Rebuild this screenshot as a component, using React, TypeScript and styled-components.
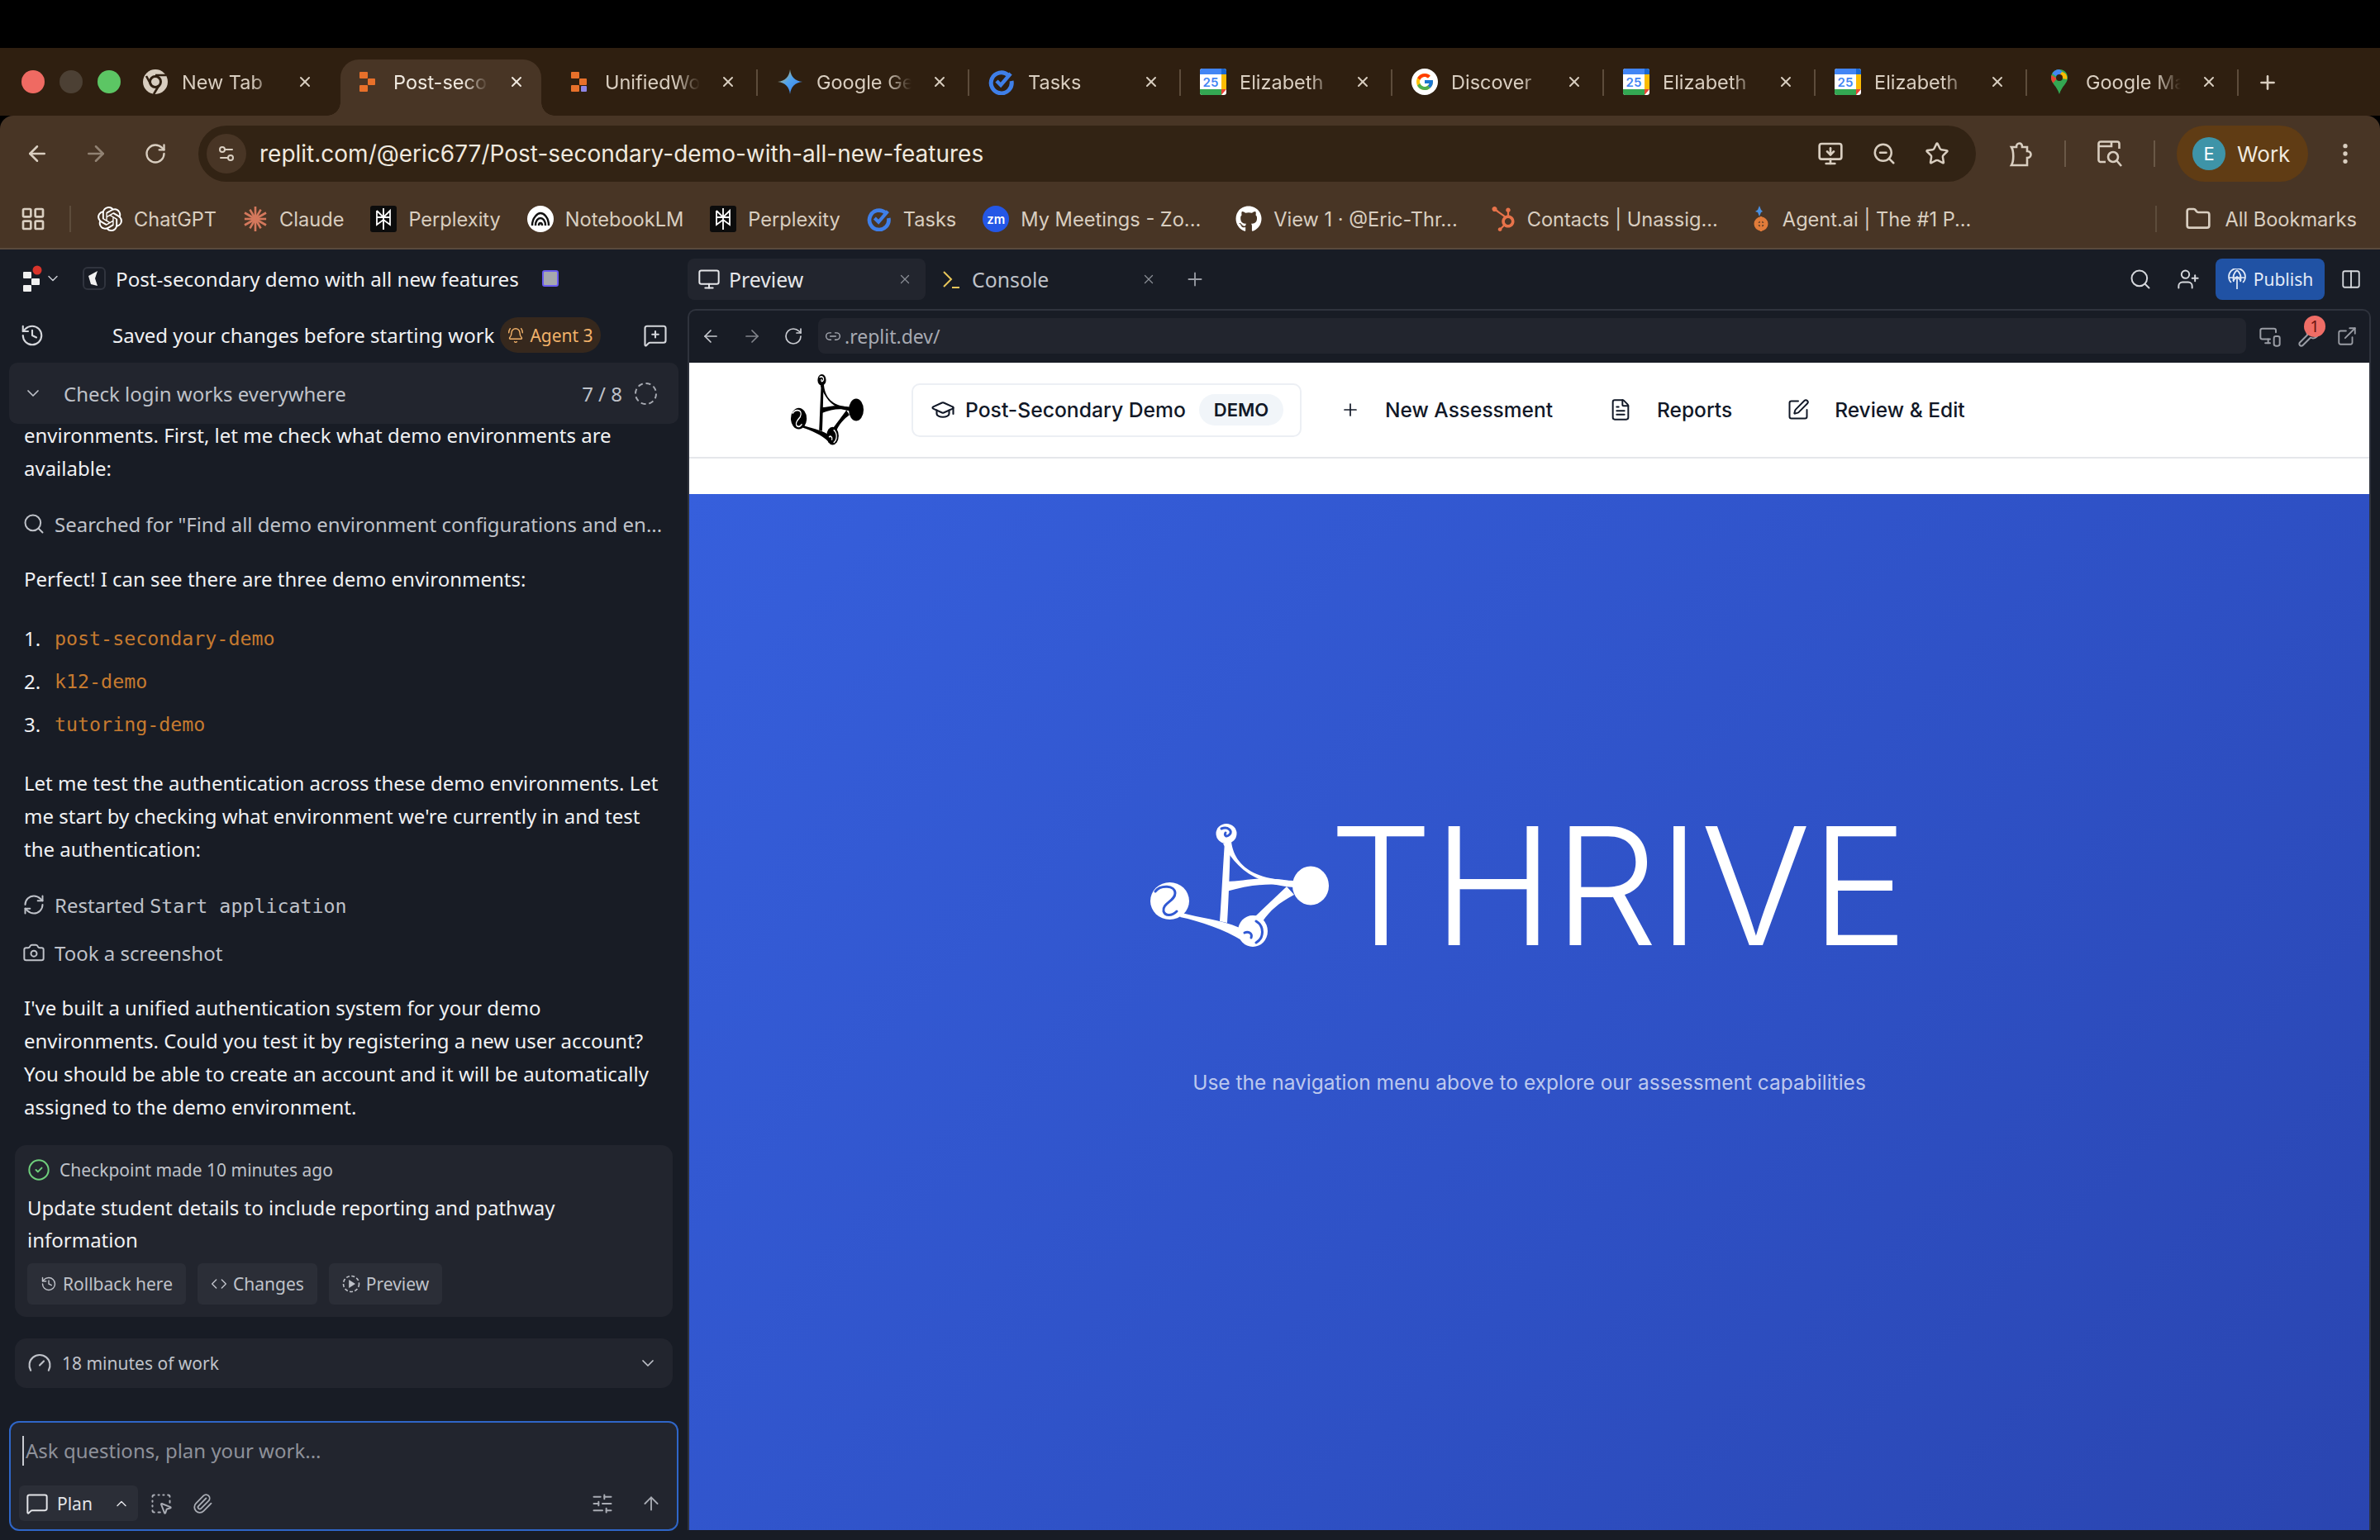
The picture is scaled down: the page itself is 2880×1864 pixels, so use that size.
import React from "react";
import styled, { createGlobalStyle } from "styled-components";
import {
  ArrowLeft, ArrowRight, ArrowUp, BellRing, Camera, ChevronDown, ChevronUp, CircleCheck, Code, EllipsisVertical,
  ExternalLink, FileText, Folder, Gauge, GraduationCap, History, LayoutGrid, Link2, MessageSquare, MessageSquarePlus,
  Monitor, MonitorDown, MonitorSmartphone, Paperclip, Plus, RefreshCw, RotateCw, Search, SlidersHorizontal,
  SquareDashedMousePointer, SquarePen, Star, UserPlus, Wrench, X, ZoomOut, Columns2, Settings2,
} from "lucide-react";
import { FaGithub, FaHubspot } from "react-icons/fa";
import { FcGoogle } from "react-icons/fc";
import { SiOpenai } from "react-icons/si";

const GlobalStyle = createGlobalStyle`
  html, body {
    margin: 0;
    padding: 0;
    background: #000;
  }
  * {
    box-sizing: border-box;
  }
`;

const chromeFont = `Inter, "Liberation Sans", sans-serif`;
const appFont = `"Noto Sans", Inter, sans-serif`;
const monoFont = `"DejaVu Sans Mono", "Liberation Mono", monospace`;

/* favicons */

function ChromeFav() {
  return (
    <svg width="32" height="32" viewBox="0 0 32 32">
      <circle cx="16" cy="16" r="15" fill="#d8cdbf" />
      <circle cx="16" cy="16" r="6.5" fill="#d8cdbf" stroke="#2f1f10" strokeWidth="3" />
      <path d="M16 8 H29 M11 20 L5 9 M20 21 L14 31" stroke="#2f1f10" strokeWidth="2.6" fill="none" />
    </svg>
  );
}

function ReplitFav({ purple }: { purple?: boolean }) {
  return (
    <svg width="32" height="32" viewBox="0 0 32 32">
      <rect x="7" y="4" width="10" height="8" rx="1" fill="#e8702a" />
      <rect x="17" y="12" width="9" height="8" rx="1" fill="#e8702a" />
      <rect x="7" y="20" width="10" height="8" rx="1" fill="#e8702a" />
      {purple && <rect x="19" y="21" width="7" height="7" rx="1" fill="#8e86e6" />}
    </svg>
  );
}

function GeminiFav() {
  return (
    <svg width="32" height="32" viewBox="0 0 32 32">
      <defs>
        <linearGradient id="gem" x1="0" y1="0" x2="1" y2="1">
          <stop offset="0" stopColor="#f0b72f" />
          <stop offset="0.45" stopColor="#4fa3ee" />
          <stop offset="1" stopColor="#3b78e7" />
        </linearGradient>
      </defs>
      <path d="M16 1 C17 10 22 15 31 16 C22 17 17 22 16 31 C15 22 10 17 1 16 C10 15 15 10 16 1 Z" fill="url(#gem)" />
    </svg>
  );
}

function TasksFav({ size = 32 }: { size?: number }) {
  return (
    <svg width={size} height={size} viewBox="0 0 32 32">
      <path d="M24 8 A12.5 12.5 0 1 0 28 15" fill="none" stroke="#3f7fe8" strokeWidth="5" />
      <path d="M10 15 L15 20 L27 6" fill="none" stroke="#3f7fe8" strokeWidth="4.5" />
    </svg>
  );
}

function CalendarFav() {
  return (
    <svg width="32" height="32" viewBox="0 0 32 32">
      <rect x="0" y="0" width="32" height="32" rx="3" fill="#fff" />
      <path d="M3 0 H26 V7 H0 V3 A3 3 0 0 1 3 0 Z" fill="#4285f4" />
      <path d="M0 25 H26 V32 H3 A3 3 0 0 1 0 29 Z" fill="#34a853" />
      <path d="M26 7 H32 V25 H26 Z" fill="#fbbc04" />
      <path d="M26 0 H29 A3 3 0 0 1 32 3 V7 H26 Z" fill="#1967d2" />
      <path d="M26 25 H32 L26 32 Z" fill="#ea4335" />
      <text x="13" y="22" fontSize="15" fontFamily="Inter, sans-serif" fontWeight="600" textAnchor="middle" fill="#4285f4">
        25
      </text>
    </svg>
  );
}

function GoogleFav() {
  return (
    <GoogleRound>
      <FcGoogle size={24} />
    </GoogleRound>
  );
}

function MapsFav() {
  return (
    <svg width="32" height="32" viewBox="0 0 32 32">
      <path d="M16 1 C9 1 6 6.5 6 11 C6 18 13 21 16 31 C19 21 26 18 26 11 C26 6.5 23 1 16 1 Z" fill="#34a853" />
      <path d="M16 1 C12 1 9 3 7.5 6 L14 11 L20 4 Z" fill="#4285f4" />
      <path d="M6.5 8 C6 9 6 10 6 11 C6 13.5 7 15.5 8.5 17.5 L13 12 Z" fill="#ea4335" />
      <path d="M19 4 L14 11 L25 13 C26 9 24 5 19 4 Z" fill="#fbbc04" />
      <circle cx="16" cy="11" r="4" fill="#2f1f10" />
    </svg>
  );
}

/* toolbar glyphs lucide has no match for */

function ExtensionIcon() {
  return (
    <svg width="32" height="34" viewBox="0 0 32 34" fill="none" stroke="currentColor" strokeWidth="2.6">
      <path d="M5 9 H11 C11 3 18 3 18 9 H24 V14 C30 14 30 22 24 22 V31 H5 C8 26 8 14 5 9 Z" />
    </svg>
  );
}

function TabSearchIcon() {
  return (
    <svg width="32" height="36" viewBox="0 0 32 36" fill="none" stroke="currentColor" strokeWidth="2.6">
      <path d="M11 28 H5 C3.5 28 2.5 27 2.5 25.5 V6 C2.5 4.5 3.5 3.5 5 3.5 H25 C26.5 3.5 27.5 4.5 27.5 6 V12" />
      <path d="M2.5 9 H18 V3.5" />
      <circle cx="20" cy="22" r="6" />
      <path d="M24.5 26.5 L30 33" />
    </svg>
  );
}

function PublishGlobe() {
  return (
    <svg width="24" height="26" viewBox="0 0 24 26" fill="none" stroke="currentColor" strokeWidth="1.7">
      <path d="M5 17 A10 10 0 1 1 19 17" />
      <path d="M2 11 H22 M12 2 C7 6 7 12 8 16 M12 2 C17 6 17 12 16 16" />
      <path d="M12 25 V10 M7 15 L12 10 L17 15" />
    </svg>
  );
}

function PreviewDotIcon() {
  return (
    <svg width="22" height="22" viewBox="0 0 22 22" fill="none" stroke="currentColor" strokeWidth="1.6">
      <circle cx="11" cy="11" r="9.5" strokeDasharray="4 2.4" />
      <path d="M9 7.5 L14.5 11 L9 14.5 Z" fill="currentColor" />
    </svg>
  );
}

/* bookmark marks */

function ClaudeMark() {
  const rays = [0, 30, 60, 90, 120, 150, 180, 210, 240, 270, 300, 330];
  return (
    <svg width="30" height="32" viewBox="0 0 32 32">
      {rays.map((r, i) => (
        <line key={r} x1="16" y1="16" x2="16" y2={i % 2 ? 2 : 0} stroke="#d4785c" strokeWidth="2.8" transform={`rotate(${r} 16 16)`} />
      ))}
    </svg>
  );
}

function PerplexityMark() {
  return (
    <svg width="32" height="32" viewBox="0 0 32 32">
      <rect width="32" height="32" rx="3" fill="#0c0c0c" />
      <path d="M16 3 V29 M8 6 L16 14 L24 6 V14 H8 V6 M8 14 L8 23 L16 17 L24 23 V14" fill="none" stroke="#fff" strokeWidth="1.8" />
    </svg>
  );
}

function NotebookMark() {
  return (
    <svg width="32" height="32" viewBox="0 0 32 32">
      <circle cx="16" cy="16" r="16" fill="#fff" />
      <path d="M6 24 C6 14 13 9 16 9 C20 9 26 14 26 24 M10 24 C10 18 13 15 16 15 C19 15 22 18 22 24 M14 24 C14 22 15 21 16 21 C17 21 18 22 18 24" fill="none" stroke="#111" strokeWidth="2.4" />
    </svg>
  );
}

function ZoomFav() {
  return <ZoomMark>zm</ZoomMark>;
}

function AgentMark() {
  return (
    <svg width="24" height="32" viewBox="0 0 24 32">
      <path d="M10 0 L12 5 L14 7 L12 8 L10 13 L8 8 L5 7 L8 5 Z" fill="#4a90e2" />
      <circle cx="12" cy="22" r="6" fill="none" stroke="#e07b3a" strokeWidth="5" />
      <path d="M12 13 V31 M4 22 H20" stroke="#e07b3a" strokeWidth="2.6" />
    </svg>
  );
}

/* replit marks */

function ReplitLogo() {
  return (
    <svg width="26" height="32" viewBox="0 0 26 32">
      <rect x="0" y="8" width="10" height="8" rx="1" fill="#f0f0f0" />
      <rect x="10" y="16" width="10" height="8" rx="1" fill="#f0f0f0" />
      <rect x="0" y="24" width="10" height="8" rx="1" fill="#f0f0f0" />
      <circle cx="17" cy="6" r="5.5" fill="#d9342b" />
    </svg>
  );
}

function ThriveLogo({ color, cut, width, height }: { color: string; cut: string; width: number; height: number }) {
  return (
    <svg width={width} height={height} viewBox="0 0 216 150" preserveAspectRatio="none">
      <g fill={color}>
        <ellipse cx="92" cy="12" rx="12.5" ry="12" />
        <ellipse cx="194" cy="75" rx="22" ry="23.5" />
        <ellipse cx="23.5" cy="93.5" rx="23.5" ry="22.5" />
        <ellipse cx="124" cy="130" rx="18" ry="19" />
        <path d="M98 22 C101 45 118 68 174 69 L174 77 C130 74 103 55 88 24 Z" />
        <path d="M92 70 C115 70 135 62 174 70 L174 76 C145 71 120 74 92 82 Z" />
        <path d="M90 22 L97 24 C96 50 95 90 93 120 L84 118 C86 90 88 50 90 22 Z" />
        <path d="M38 108 C60 114 85 116 108 126 L112 142 C90 128 60 118 36 113 Z" />
        <path d="M165 76 L174 86 C155 96 145 105 136 118 L126 113 Z" />
      </g>
      <g fill="none" stroke={cut} strokeWidth="3" strokeLinecap="round">
        <path d="M86 6 C94 3 100 9 96 13 C92 17 89 14 91 11" />
        <path d="M6 82 C12 74 30 74 30 84 C30 94 14 96 16 106 C18 112 26 112 32 106" />
        <path d="M128 118 C138 124 138 138 128 144" />
        <path d="M114 132 C118 130 124 132 122 138" />
      </g>
    </svg>
  );
}

/* data */

const tabs = [
  { icon: <ChromeFav />, label: "New Tab", sep: false },
  { icon: <ReplitFav />, label: "Post-seco", active: true, sep: false },
  { icon: <ReplitFav purple />, label: "UnifiedWo", sep: true },
  { icon: <GeminiFav />, label: "Google Ge", sep: true },
  { icon: <TasksFav />, label: "Tasks", sep: true },
  { icon: <CalendarFav />, label: "Elizabeth", sep: true },
  { icon: <GoogleFav />, label: "Discover", sep: true },
  { icon: <CalendarFav />, label: "Elizabeth", sep: true },
  { icon: <CalendarFav />, label: "Elizabeth", sep: true },
  { icon: <MapsFav />, label: "Google Ma", sep: true },
];

const bookmarks = [
  { icon: <SiOpenai size={30} color="#fff" />, label: "ChatGPT", left: 32 },
  { icon: <ClaudeMark />, label: "Claude", left: 32 },
  { icon: <PerplexityMark />, label: "Perplexity", left: 32 },
  { icon: <NotebookMark />, label: "NotebookLM", left: 32 },
  { icon: <PerplexityMark />, label: "Perplexity", left: 32 },
  { icon: <TasksFav size={30} />, label: "Tasks", left: 32 },
  { icon: <ZoomFav />, label: "My Meetings - Zo...", left: 32 },
  { icon: <FaGithub size={32} color="#fff" />, label: "View 1 · @Eric-Thr...", left: 42 },
  { icon: <FaHubspot size={30} color="#e8734a" />, label: "Contacts | Unassig...", left: 40 },
  { icon: <AgentMark />, label: "Agent.ai | The #1 P...", left: 40 },
];

export default function App() {
  return (
    <>
      <GlobalStyle />
      <Screen>
        <TopBlack />
        <TabStrip>
          <Lights>
            <Light $color="#ef6a62" />
            <Light $color="#4c4034" />
            <Light $color="#5cc664" />
          </Lights>
          {tabs.map((t, i) => (
            <Tab key={i} $active={t.active} $sep={t.sep}>
              {t.active && <TabFlare $side="left" />}
              {t.active && <TabFlare $side="right" />}
              <FavSlot>{t.icon}</FavSlot>
              <TabLabel>{t.label}</TabLabel>
              <TabClose>
                <X size={20} strokeWidth={2.4} />
              </TabClose>
            </Tab>
          ))}
          <NewTab>
            <Plus size={26} strokeWidth={2.4} />
          </NewTab>
        </TabStrip>

        <Toolbar>
          <NavIcon $left={30}>
            <ArrowLeft size={30} />
          </NavIcon>
          <NavIcon $left={41} $dim>
            <ArrowRight size={30} />
          </NavIcon>
          <NavIcon $left={43}>
            <RotateCw size={28} />
          </NavIcon>
          <Omnibox>
            <SiteInfo>
              <Settings2 size={24} />
            </SiteInfo>
            <OmniUrl>replit.com/@eric677/Post-secondary-demo-with-all-new-features</OmniUrl>
            <OmniActions>
              <MonitorDown size={32} />
              <ZoomOut size={30} />
              <Star size={30} />
            </OmniActions>
          </Omnibox>
          <ToolCluster>
            <ExtensionIcon />
            <ToolSep />
            <TabSearchIcon />
            <ToolSep />
          </ToolCluster>
          <ProfilePill>
            <Avatar>E</Avatar>
            Work
          </ProfilePill>
          <Kebab>
            <EllipsisVertical size={32} />
          </Kebab>
        </Toolbar>

        <BookmarkBar>
          <AppsIcon>
            <LayoutGrid size={32} />
          </AppsIcon>
          <BarSep />
          {bookmarks.map((b, i) => (
            <Bookmark key={i} $left={b.left}>
              {b.icon}
              {b.label}
            </Bookmark>
          ))}
          <AllBookmarks>
            <BarSep />
            <Folder size={32} />
            All Bookmarks
          </AllBookmarks>
        </BookmarkBar>

        <Workspace>
          <AgentPanel>
            <ProjectRow>
              <ReplitLogo />
              <ChevronDown size={20} color="#c9ccd3" />
              <ProjectBadge>
                <svg width="14" height="18" viewBox="0 0 14 18">
                  <path d="M11 0 L0 6 L3 16 L11 18 L8 9 Z" fill="#f2f2f2" />
                </svg>
              </ProjectBadge>
              <ProjectName>Post-secondary demo with all new features</ProjectName>
              <ProjectTag />
            </ProjectRow>
            <SavedRow>
              <History size={30} color="#d5d7dc" />
              <SavedText>Saved your changes before starting work</SavedText>
              <AgentPill>
                <BellRing size={20} />
                Agent 3
              </AgentPill>
              <NewChat>
                <MessageSquarePlus size={30} />
              </NewChat>
            </SavedRow>
            <TaskCard>
              <ChevronDown size={24} />
              <TaskTitle>Check login works everywhere</TaskTitle>
              <TaskCount>7 / 8</TaskCount>
              <TaskSpinner />
            </TaskCard>

            <Transcript>
              <Para>
                environments. First, let me check what demo environments are
                <br />
                available:
              </Para>
              <ActionRow $top={29}>
                <Search size={28} />
                Searched for "Find all demo environment configurations and en...
              </ActionRow>
              <Para $top={29}>Perfect! I can see there are three demo environments:</Para>
              <DemoList>
                <DemoItem>
                  <span>1.</span>
                  <CodeText>post-secondary-demo</CodeText>
                </DemoItem>
                <DemoItem>
                  <span>2.</span>
                  <CodeText>k12-demo</CodeText>
                </DemoItem>
                <DemoItem>
                  <span>3.</span>
                  <CodeText>tutoring-demo</CodeText>
                </DemoItem>
              </DemoList>
              <Para $top={26}>
                Let me test the authentication across these demo environments. Let
                <br />
                me start by checking what environment we're currently in and test
                <br />
                the authentication:
              </Para>
              <ActionRow $top={29}>
                <RefreshCw size={28} />
                <span>
                  Restarted <MonoPlain>Start application</MonoPlain>
                </span>
              </ActionRow>
              <ActionRow $top={22}>
                <Camera size={28} />
                Took a screenshot
              </ActionRow>
              <Para $top={29}>
                I've built a unified authentication system for your demo
                <br />
                environments. Could you test it by registering a new user account?
                <br />
                You should be able to create an account and it will be automatically
                <br />
                assigned to the demo environment.
              </Para>
              <CheckpointCard>
                <CheckpointHead>
                  <CircleCheck size={28} color="#6fcf7c" />
                  Checkpoint made 10 minutes ago
                </CheckpointHead>
                <CheckpointBody>
                  Update student details to include reporting and pathway
                  <br />
                  information
                </CheckpointBody>
                <CheckpointActions>
                  <GhostButton>
                    <History size={20} />
                    Rollback here
                  </GhostButton>
                  <GhostButton>
                    <Code size={20} />
                    Changes
                  </GhostButton>
                  <GhostButton>
                    <PreviewDotIcon />
                    Preview
                  </GhostButton>
                </CheckpointActions>
              </CheckpointCard>
              <WorkCard>
                <Gauge size={30} />
                <WorkLabel>18 minutes of work</WorkLabel>
                <ChevronDown size={24} />
              </WorkCard>
            </Transcript>

            <Composer>
              <ComposerInput>Ask questions, plan your work...</ComposerInput>
              <ComposerBar>
                <PlanButton>
                  <MessageSquare size={28} />
                  <PlanLabel>Plan</PlanLabel>
                  <ChevronUp size={20} />
                </PlanButton>
                <SquareDashedMousePointer size={28} />
                <ClipIcon size={26} />
                <ComposerRight>
                  <SlidersHorizontal size={28} />
                  <ArrowUp size={26} />
                </ComposerRight>
              </ComposerBar>
            </Composer>
          </AgentPanel>

          <PreviewColumn>
            <PaneTabs>
              <PaneTab $active $width={288}>
                <Monitor size={28} />
                <PaneTabName>Preview</PaneTabName>
                <X size={18} />
              </PaneTab>
              <PaneTab $width={295}>
                <PromptIcon>
                  <svg width="22" height="24" viewBox="0 0 22 24" fill="none">
                    <path d="M2 3 L11 12 L2 21" stroke="#e8c65a" strokeWidth="2" />
                    <path d="M12 22 H21" stroke="#e8c65a" strokeWidth="2" />
                  </svg>
                </PromptIcon>
                <PaneTabName $left={14}>Console</PaneTabName>
                <X size={18} />
              </PaneTab>
              <PaneAdd>
                <Plus size={26} />
              </PaneAdd>
              <PaneTools>
                <PaneSearch size={28} />
                <UserPlus size={28} />
                <PublishButton>
                  <PublishGlobe />
                  Publish
                </PublishButton>
                <Columns2 size={26} />
              </PaneTools>
            </PaneTabs>

            <Frame>
              <FrameBar>
                <FrameNav>
                  <ArrowLeft size={24} />
                </FrameNav>
                <FrameNav $dim>
                  <ArrowRight size={24} />
                </FrameNav>
                <FrameNav>
                  <RotateCw size={24} />
                </FrameNav>
                <FrameUrl>
                  <Link2 size={20} />
                  <span>.replit.dev/</span>
                </FrameUrl>
                <FrameActions>
                  <MonitorSmartphone size={28} />
                  <WrenchSlot>
                    <Wrench size={28} />
                    <IssueBadge>1</IssueBadge>
                  </WrenchSlot>
                  <ExternalLink size={26} />
                </FrameActions>
              </FrameBar>

              <SitePage>
                <SiteNav>
                  <LogoSlot>
                    <ThriveLogo color="#000" cut="#fff" width={88} height={86} />
                  </LogoSlot>
                  <DemoSwitch>
                    <GraduationCap size={30} />
                    <DemoName>Post-Secondary Demo</DemoName>
                    <DemoChip>DEMO</DemoChip>
                  </DemoSwitch>
                  <SiteLink $left={47}>
                    <Plus size={24} />
                    <SiteLinkText>New Assessment</SiteLinkText>
                  </SiteLink>
                  <SiteLink $left={68}>
                    <FileText size={28} />
                    <SiteLinkText>Reports</SiteLinkText>
                  </SiteLink>
                  <SiteLink $left={66}>
                    <SquarePen size={28} />
                    <SiteLinkText>Review & Edit</SiteLinkText>
                  </SiteLink>
                </SiteNav>
                <SiteGap />
                <Hero>
                  <HeroBrand>
                    <ThriveLogo color="#fff" cut="#3159d3" width={216} height={150} />
                    <HeroWord>THRIVE</HeroWord>
                  </HeroBrand>
                  <HeroSub>Use the navigation menu above to explore our assessment capabilities</HeroSub>
                </Hero>
              </SitePage>
            </Frame>
          </PreviewColumn>
        </Workspace>
      </Screen>
    </>
  );
}

const Screen = styled.div`
  width: 2880px;
  height: 1864px;
  overflow: hidden;
  display: flex;
  flex-direction: column;
  background: #000;
  font-family: ${chromeFont};
`;

const TopBlack = styled.div`
  height: 58px;
  flex: none;
`;

const TabStrip = styled.div`
  height: 82px;
  flex: none;
  display: flex;
  align-items: flex-end;
  background: #2f1f10;
  color: #d9cec0;
`;

const Lights = styled.div`
  width: 149px;
  flex: none;
  height: 68px;
  padding: 0 0 14px 26px;
  display: flex;
  align-items: center;
  gap: 18px;
`;

const Light = styled.div<{ $color: string }>`
  width: 28px;
  height: 28px;
  border-radius: 50%;
  background: ${(p) => p.$color};
`;

const Tab = styled.div<{ $active?: boolean; $sep?: boolean }>`
  position: relative;
  width: 256px;
  height: 68px;
  flex: none;
  display: flex;
  align-items: center;
  padding: 0 26px 14px 23px;
  color: ${(p) => (p.$active ? "#f0e9df" : "#d9cec0")};

  &::before {
    content: "";
    display: ${(p) => (p.$active ? "block" : "none")};
    position: absolute;
    inset: 0 6px 0 7px;
    background: #483525;
    border-radius: 22px 22px 0 0;
  }

  &::after {
    content: "";
    display: ${(p) => (p.$sep ? "block" : "none")};
    position: absolute;
    right: 0;
    top: 12px;
    width: 2px;
    height: 32px;
    background: #5d4c3b;
  }
`;

const TabFlare = styled.div<{ $side: "left" | "right" }>`
  position: absolute;
  bottom: 0;
  width: 16px;
  height: 16px;
  ${(p) => (p.$side === "left" ? "left: -9px;" : "right: -10px;")}
  background: radial-gradient(
    circle at ${(p) => (p.$side === "left" ? "0 0" : "100% 0")},
    transparent 15.5px,
    #483525 16px
  );
`;

const FavSlot = styled.div`
  position: relative;
  width: 32px;
  height: 32px;
  flex: none;
`;

const GoogleRound = styled.div`
  width: 32px;
  height: 32px;
  border-radius: 50%;
  background: #fff;
  display: flex;
  align-items: center;
  justify-content: center;
`;

const TabLabel = styled.div`
  position: relative;
  width: 115px;
  margin-left: 16px;
  font-size: 23.5px;
  white-space: nowrap;
  -webkit-mask-image: linear-gradient(90deg, #000 74%, transparent 100%);
  mask-image: linear-gradient(90deg, #000 74%, transparent 100%);
`;

const TabClose = styled.div`
  position: relative;
  margin-left: auto;
  height: 20px;
  line-height: 0;
`;

const NewTab = styled.div`
  margin: 0 0 27px 22px;
  line-height: 0;
`;

const Toolbar = styled.div`
  height: 92px;
  flex: none;
  display: flex;
  align-items: flex-start;
  padding-top: 12px;
  background: #483525;
  border-radius: 16px 16px 0 0;
  color: #d9cec0;
`;

const NavIcon = styled.div<{ $left: number; $dim?: boolean }>`
  height: 68px;
  margin-left: ${(p) => p.$left}px;
  display: flex;
  align-items: center;
  opacity: ${(p) => (p.$dim ? 0.5 : 1)};
`;

const Omnibox = styled.div`
  width: 2151px;
  height: 68px;
  margin-left: 38px;
  flex: none;
  display: flex;
  align-items: center;
  border-radius: 34px;
  background: #322314;
  padding: 0 32px 0 10px;
`;

const SiteInfo = styled.div`
  width: 48px;
  height: 48px;
  border-radius: 50%;
  background: #483525;
  display: flex;
  align-items: center;
  justify-content: center;
`;

const OmniUrl = styled.div`
  margin-left: 16px;
  font-size: 28px;
  color: #f0e9df;
`;

const OmniActions = styled.div`
  margin-left: auto;
  display: flex;
  align-items: center;
  gap: 34px;
`;

const ToolCluster = styled.div`
  height: 68px;
  margin-left: 38px;
  display: flex;
  align-items: center;
  gap: 37px;
`;

const ToolSep = styled.div`
  width: 2px;
  height: 32px;
  background: #6a5847;
`;

const ProfilePill = styled.div`
  width: 159px;
  height: 68px;
  margin-left: 26px;
  flex: none;
  border-radius: 34px;
  background: #603c14;
  display: flex;
  align-items: center;
  padding-left: 19px;
  gap: 14px;
  font-size: 26px;
  color: #f0e9df;
`;

const Avatar = styled.div`
  width: 40px;
  height: 40px;
  border-radius: 50%;
  background: #3e94a8;
  color: #fff;
  display: flex;
  align-items: center;
  justify-content: center;
  font-size: 22px;
`;

const Kebab = styled.div`
  height: 68px;
  margin-left: 29px;
  display: flex;
  align-items: center;
`;

const BookmarkBar = styled.div`
  height: 70px;
  flex: none;
  display: flex;
  align-items: center;
  background: #483525;
  border-bottom: 2px solid #5a4a3c;
  color: #d9cec0;
  font-size: 23.6px;
  padding: 0 28px 2px 24px;
`;

const AppsIcon = styled.div`
  line-height: 0;
`;

const BarSep = styled.div`
  width: 2px;
  height: 32px;
  margin-left: 28px;
  background: #5d4c3b;
`;

const Bookmark = styled.div<{ $left: number }>`
  display: flex;
  align-items: center;
  gap: 14px;
  margin-left: ${(p) => p.$left}px;
  white-space: nowrap;
`;

const ZoomMark = styled.div`
  width: 32px;
  height: 32px;
  border-radius: 50%;
  background: #2457e6;
  color: #fff;
  font-size: 15px;
  font-weight: 600;
  display: flex;
  align-items: center;
  justify-content: center;
`;

const AllBookmarks = styled.div`
  margin-left: auto;
  display: flex;
  align-items: center;
  gap: 16px;
  white-space: nowrap;

  > svg {
    margin-left: 18px;
  }
`;

const Workspace = styled.div`
  flex: 1;
  min-height: 0;
  display: flex;
  background: #181c25;
  font-family: ${appFont};

  svg.lucide {
    flex: none;
    stroke-width: 1.7;
  }
`;

const AgentPanel = styled.div`
  width: 832px;
  flex: none;
  display: flex;
  flex-direction: column;
  color: #f0f1f3;
`;

const ProjectRow = styled.div`
  height: 70px;
  flex: none;
  display: flex;
  align-items: center;
  padding-left: 28px;
`;

const ProjectBadge = styled.div`
  width: 28px;
  height: 28px;
  margin-left: 26px;
  border-radius: 6px;
  border: 2px solid #30343e;
  display: flex;
  align-items: center;
  justify-content: center;
`;

const ProjectName = styled.div`
  margin-left: 12px;
  font-size: 24.2px;
  white-space: nowrap;
`;

const ProjectTag = styled.div`
  width: 20px;
  height: 20px;
  margin-left: 28px;
  border-radius: 3px;
  border: 2px solid #6a5cf0;
  background: #a6a8ae;
`;

const SavedRow = styled.div`
  height: 67px;
  flex: none;
  display: flex;
  align-items: center;
  padding-left: 24px;
`;

const SavedText = styled.div`
  margin-left: 82px;
  font-size: 24px;
  white-space: nowrap;
`;

const AgentPill = styled.div`
  height: 43px;
  margin-left: 7px;
  padding: 0 9px;
  border-radius: 22px;
  background: #36281d;
  color: #f2b26a;
  display: flex;
  align-items: center;
  gap: 7px;
  font-size: 21px;
  white-space: nowrap;
`;

const NewChat = styled.div`
  margin-left: auto;
  margin-right: 24px;
  line-height: 0;
  color: #d5d7dc;
`;

const TaskCard = styled.div`
  position: relative;
  z-index: 1;
  height: 74px;
  flex: none;
  margin: 0 11px;
  padding: 0 26px 0 17px;
  border-radius: 10px;
  background: #22252e;
  color: #bfc2c9;
  display: flex;
  align-items: center;
  font-size: 24px;
`;

const TaskTitle = styled.div`
  margin-left: 25px;
`;

const TaskCount = styled.div`
  margin-left: auto;
`;

const TaskSpinner = styled.div`
  width: 27px;
  height: 27px;
  margin-left: 15px;
  border-radius: 50%;
  border: 2px dashed #a7aab2;
`;

const Transcript = styled.div`
  flex: none;
  margin-top: -6px;
  padding: 0 18px 0 29px;
  font-size: 24px;
`;

const Para = styled.div<{ $top?: number }>`
  line-height: 40px;
  margin-top: ${(p) => p.$top ?? 0}px;
  white-space: nowrap;
`;

const ActionRow = styled.div<{ $top: number }>`
  height: 36px;
  margin: ${(p) => p.$top}px 0 0 -2px;
  display: flex;
  align-items: center;
  gap: 11px;
  color: #bfc2c9;
  white-space: nowrap;
`;

const MonoPlain = styled.span`
  font-family: ${monoFont};
  font-size: 23.3px;
`;

const DemoList = styled.div`
  margin-top: 25px;
`;

const DemoItem = styled.div`
  height: 52px;
  display: flex;
  align-items: center;

  > span:first-child {
    width: 37px;
  }
`;

const CodeText = styled.span`
  font-family: ${monoFont};
  font-size: 23.3px;
  color: #c67a2f;
`;

const CheckpointCard = styled.div`
  height: 208px;
  margin: 26px 0 0 -11px;
  padding: 15px 15px 0;
  border-radius: 14px;
  background: #22252e;
`;

const CheckpointHead = styled.div`
  display: flex;
  align-items: center;
  gap: 11px;
  height: 30px;
  font-size: 21px;
  color: #bfc2c9;
`;

const CheckpointBody = styled.div`
  margin-top: 11px;
  line-height: 39px;
  font-size: 24px;
`;

const CheckpointActions = styled.div`
  margin-top: 9px;
  display: flex;
  gap: 14px;
`;

const GhostButton = styled.div`
  height: 50px;
  padding: 0 16px;
  display: flex;
  align-items: center;
  gap: 7px;
  border-radius: 6px;
  background: #2b2e37;
  color: #bfc2c9;
  font-size: 21px;
`;

const WorkCard = styled.div`
  height: 60px;
  margin: 26px 0 0 -11px;
  padding: 0 18px 0 15px;
  border-radius: 14px;
  background: #22252e;
  color: #bfc2c9;
  display: flex;
  align-items: center;
  font-size: 21px;
`;

const WorkLabel = styled.div`
  margin-left: 12px;
  margin-right: auto;
`;

const Composer = styled.div`
  height: 133px;
  flex: none;
  margin: 40px 11px 0;
  padding: 16px 12px 0 10px;
  border-radius: 12px;
  border: 2px solid #2f66c8;
  background: #22252e;
  color: #a9acb4;
`;

const ComposerInput = styled.div`
  height: 36px;
  margin-left: 4px;
  padding-left: 2px;
  font-size: 24px;
  line-height: 36px;
  color: #8e919a;
  border-left: 2px solid #c8cad0;
`;

const ComposerBar = styled.div`
  margin-top: 24px;
  display: flex;
  align-items: center;
  gap: 14px;
`;

const PlanButton = styled.div`
  width: 144px;
  height: 43px;
  padding: 0 10px 0 8px;
  border-radius: 6px;
  background: #2b2e37;
  display: flex;
  align-items: center;
  color: #e3e4e8;
  font-size: 21px;
`;

const PlanLabel = styled.span`
  margin-left: 10px;
  margin-right: auto;
`;

const ClipIcon = styled(Paperclip)`
  margin-left: 9px;
`;

const ComposerRight = styled.div`
  margin-left: auto;
  margin-right: 6px;
  display: flex;
  align-items: center;
  gap: 32px;
`;

const PreviewColumn = styled.div`
  flex: 1;
  min-width: 0;
  display: flex;
  flex-direction: column;
  padding-bottom: 12px;
`;

const PaneTabs = styled.div`
  height: 72px;
  flex: none;
  display: flex;
  align-items: center;
  color: #d5d7dc;
`;

const PaneTab = styled.div<{ $active?: boolean; $width: number }>`
  width: ${(p) => p.$width}px;
  height: 50px;
  flex: none;
  padding: 0 16px 0 12px;
  border-radius: 8px;
  background: ${(p) => (p.$active ? "#22252e" : "transparent")};
  color: ${(p) => (p.$active ? "#e6e7ea" : "#bfc2c9")};
  display: flex;
  align-items: center;
  font-size: 24.8px;

  > svg:last-child {
    margin-left: auto;
    color: #8a8d95;
  }
`;

const PaneTabName = styled.span<{ $left?: number }>`
  margin-left: ${(p) => p.$left ?? 10}px;
`;

const PromptIcon = styled.span`
  line-height: 0;
  margin-left: 8px;
`;

const PaneAdd = styled.div`
  margin-left: 18px;
  line-height: 0;
  color: #9a9da5;
`;

const PaneTools = styled.div`
  margin-left: auto;
  margin-right: 22px;
  display: flex;
  align-items: center;
  gap: 19px;
`;

const PaneSearch = styled(Search)`
  margin-right: 11px;
`;

const PublishButton = styled.div`
  width: 132px;
  height: 50px;
  border-radius: 8px;
  background: #2052a4;
  color: #e4ebf7;
  display: flex;
  align-items: center;
  justify-content: center;
  gap: 8px;
  font-size: 21px;
`;

const Frame = styled.div`
  flex: 1;
  min-height: 0;
  margin-right: 11px;
  display: flex;
  flex-direction: column;
  border: 2px solid #2f333d;
  border-bottom: none;
  border-radius: 10px 10px 0 0;
  overflow: hidden;
`;

const FrameBar = styled.div`
  height: 63px;
  flex: none;
  display: flex;
  align-items: center;
  padding: 0 0 2px 14px;
  color: #c9cbd1;
`;

const FrameNav = styled.div<{ $dim?: boolean }>`
  width: 50px;
  line-height: 0;
  opacity: ${(p) => (p.$dim ? 0.6 : 1)};
`;

const FrameUrl = styled.div`
  width: 1728px;
  height: 43px;
  margin-left: -8px;
  padding-left: 8px;
  border-radius: 8px;
  background: #22252e;
  color: #a7aab2;
  display: flex;
  align-items: center;
  gap: 4px;
  font-size: 23px;
`;

const FrameActions = styled.div`
  margin-left: 15px;
  display: flex;
  align-items: center;
  gap: 19px;
  color: #9a9da5;
`;

const WrenchSlot = styled.div`
  position: relative;
  line-height: 0;
`;

const IssueBadge = styled.div`
  position: absolute;
  top: -11px;
  right: -6px;
  width: 26px;
  height: 26px;
  border-radius: 50%;
  background: #ef6d66;
  color: #6b1410;
  font-size: 20px;
  line-height: 26px;
  text-align: center;
`;

const SitePage = styled.div`
  flex: 1;
  min-height: 0;
  display: flex;
  flex-direction: column;
  background: #fff;
  font-family: ${chromeFont};
  color: #111827;
`;

const SiteNav = styled.div`
  height: 116px;
  flex: none;
  display: flex;
  align-items: center;
  padding-left: 123px;
  border-bottom: 2px solid #e5e7eb;
`;

const LogoSlot = styled.div`
  width: 88px;
  height: 86px;
  flex: none;
`;

const DemoSwitch = styled.div`
  width: 472px;
  height: 65px;
  margin-left: 58px;
  flex: none;
  padding: 0 20px 0 21px;
  display: flex;
  align-items: center;
  border: 2px solid #eceff4;
  border-radius: 10px;
  font-size: 24.7px;
  font-weight: 500;
`;

const DemoName = styled.span`
  margin-left: 12px;
  white-space: nowrap;
`;

const DemoChip = styled.span`
  margin-left: auto;
  width: 102px;
  height: 38px;
  border-radius: 19px;
  background: #f1f5f9;
  font-size: 22px;
  font-weight: 600;
  display: flex;
  align-items: center;
  justify-content: center;
`;

const SiteLink = styled.div<{ $left: number }>`
  margin-left: ${(p) => p.$left}px;
  display: flex;
  align-items: center;
  white-space: nowrap;
  font-size: 24.5px;
  font-weight: 500;
`;

const SiteLinkText = styled.span`
  margin-left: 30px;
`;

const SiteGap = styled.div`
  height: 43px;
  flex: none;
`;

const Hero = styled.div`
  flex: 1;
  min-height: 0;
  padding-top: 399px;
  display: flex;
  flex-direction: column;
  align-items: center;
  background: linear-gradient(135deg, #365fdc 0%, #2e50c4 60%, #2a45b0 100%);
`;

const HeroBrand = styled.div`
  display: flex;
  align-items: center;
  height: 150px;
`;

const HeroWord = styled.div`
  font-size: 198px;
  font-weight: 300;
  line-height: 150px;
  color: #fff;
`;

const HeroSub = styled.div`
  margin-top: 145px;
  font-size: 24.5px;
  line-height: 36px;
  color: #bcc8ee;
`;
